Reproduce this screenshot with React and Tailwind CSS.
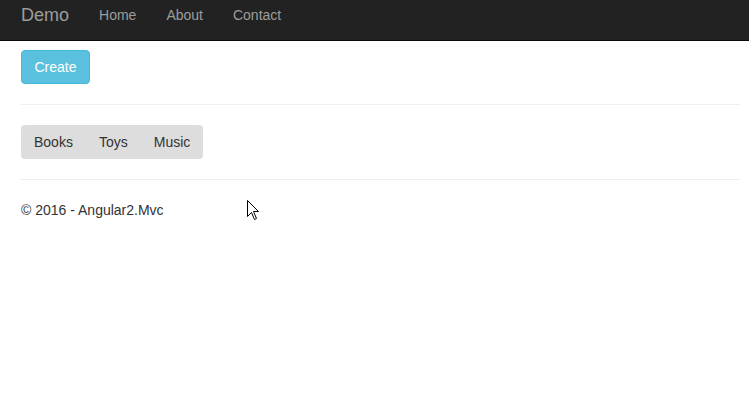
import React from "react";

export default function App() {
  return (
    <div className="relative min-h-[410px] bg-white text-[14px] leading-[20px] text-[#333]" style={{ fontFamily: '"Liberation Sans", Arial, sans-serif' }}>
      <nav className="h-[41px] bg-[#222] border-b border-[#080808]">
        <div className="h-[30px] flex items-center pl-[21px]">
          <span className="text-[18px] text-[#9d9d9d] pr-[15px]">Demo</span>
          <span className="text-[#9d9d9d] px-[15px]">Home</span>
          <span className="text-[#9d9d9d] px-[15px]">About</span>
          <span className="text-[#9d9d9d] px-[15px]">Contact</span>
        </div>
      </nav>
      <div className="pl-[21px] pr-[9px] pt-[9px]">
        <button className="h-[34px] px-[12.5px] bg-[#5bc0de] border border-[#46b8da] rounded-[4px] text-white text-[14px]">
          Create
        </button>
        <hr className="my-[20px] border-0 border-t border-[#eee]" />
        <div className="inline-flex h-[34px] items-center bg-[#ddd] rounded-[4px]">
          <span className="px-[13px]">Books</span>
          <span className="px-[13px]">Toys</span>
          <span className="px-[13px]">Music</span>
        </div>
        <hr className="my-[20px] border-0 border-t border-[#eee]" />
        <p>© 2016 - Angular2.Mvc</p>
      </div>
      <svg className="absolute left-[247px] top-[200px]" width="13" height="21" viewBox="0 0 13 21">
        <path d="M0.5 0.5 L0.5 16.5 L4.5 12.5 L7.5 19.5 L9.5 18.5 L6.5 11.5 L11.5 11.5 Z" fill="white" stroke="black" strokeWidth="1" />
      </svg>
    </div>
  );
}
